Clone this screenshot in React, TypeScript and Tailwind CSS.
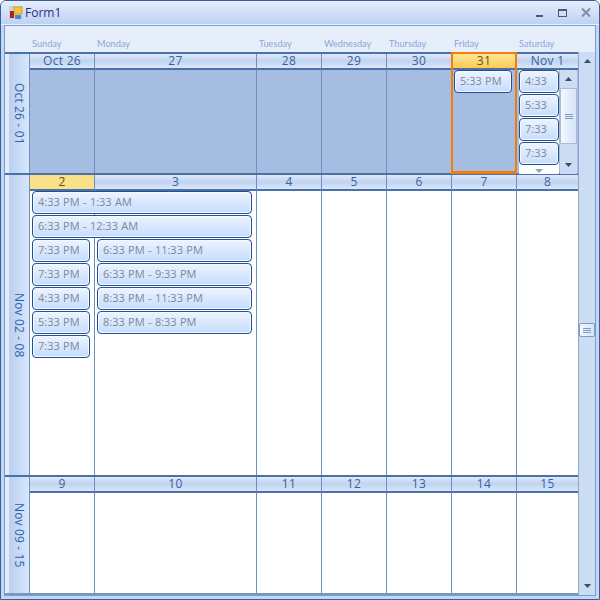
const columns = "grid grid-cols-[25px_65px_162px_65px_65px_65px_65px_61px]";

const dayNames = ["Sunday", "Monday", "Tuesday", "Wednesday", "Thursday", "Friday", "Saturday"];

const weeks = [
  { label: "Oct 26 - 01", days: ["Oct 26", "27", "28", "29", "30", "31", "Nov 1"], height: "h-[121px]" },
  { label: "Nov 02 - 08", days: ["2", "3", "4", "5", "6", "7", "8"], height: "h-[302px]" },
  { label: "Nov 09 - 15", days: ["9", "10", "11", "12", "13", "14", "15"], height: "h-[118px]" },
];

function Appt({ text, className }: { text: string; className: string }) {
  return (
    <div
      className={`flex h-[23px] shrink-0 items-center rounded-[4px] border border-[#25508f] bg-gradient-to-b from-[#edf4ff] to-[#c6dcfd] pl-[5px] text-[11px] [word-spacing:0.5px] whitespace-pre text-[#7d8799] shadow-[inset_0_0_0_1px_#f4f8ff] ${className}`}
    >
      {text}
    </div>
  );
}

function Arrow({ up }: { up?: boolean }) {
  return (
    <svg width="7" height="4" viewBox="0 0 7 4" className="block">
      <path d={up ? "M3.5 0L7 4H0Z" : "M0 0H7L3.5 4Z"} fill="#3d4d66" />
    </svg>
  );
}

function Grip() {
  return (
    <div className="flex flex-col gap-[1px]">
      <div className="h-[1px] w-[8px] bg-[#7d9bc9]" />
      <div className="h-[1px] w-[8px] bg-[#7d9bc9]" />
      <div className="h-[1px] w-[8px] bg-[#7d9bc9]" />
    </div>
  );
}

function WeekBody({ index }: { index: number }) {
  const blue = index === 0;
  return (
    <>
      {[0, 1, 2, 3, 4, 5, 6].map((d) => (
        <div
          key={d}
          className={`border-r border-[#6f90bf] ${blue ? "bg-[#a4bde0]" : "bg-white"} ${d === 6 ? "border-r-0" : ""}`}
        />
      ))}
    </>
  );
}

function Week({ index }: { index: number }) {
  const week = weeks[index];
  return (
    <div className={`${columns} ${week.height} relative grid-rows-[16px_1fr] border-t-2 border-[#4a72a8]`}>
      <div className="row-span-2 flex border-r border-[#6f90bf]">
        <div className="w-[4px] bg-[#e3edfd]" />
        <div className="flex flex-1 items-center justify-center bg-gradient-to-r from-[#b9cfee] to-[#d7e6fc] text-[12px] tracking-[0.15px] text-[#2f5ea6] [writing-mode:vertical-rl]">
          {week.label}
        </div>
      </div>
      {week.days.map((d, i) => {
        const today = index === 1 && i === 0;
        const selected = index === 0 && i === 5;
        return (
          <div
            key={d}
            className={`flex items-center justify-center border-b-2 border-[#4a72a8] text-[12px] leading-none tracking-[0.3px] ${i < 6 ? "border-r border-r-[#6f90bf]" : ""} ${
              today
                ? "bg-[#fbe08a] text-[#5a5324]"
                : selected
                  ? "bg-gradient-to-b from-[#fbe694] to-[#fdc955] text-[#5a5324]"
                  : "bg-gradient-to-b from-[#dfe9fb] via-[#bfd3f0] to-[#dbe7fb] text-[#3a5f9e]"
            }`}
          >
            {d}
          </div>
        );
      })}
      <div className="col-start-2 col-span-7 row-start-2 grid grid-cols-[65px_162px_65px_65px_65px_65px_61px]">
        <WeekBody index={index} />
      </div>
    </div>
  );
}

export default function App() {
  return (
    <div className="flex h-[600px] w-[600px] flex-col overflow-hidden rounded-t-[6px] border border-[#3b5f8f] bg-[#bfd8f8] font-['Open_Sans','Liberation_Sans',sans-serif]">
      {/* title bar */}
      <div className="flex h-[24px] shrink-0 items-center border-b border-[#eaf2fe] bg-gradient-to-b from-[#e6edfb] to-[#bdd2f4] pl-[8px] pr-[8px]">
        <svg width="14" height="14" viewBox="0 0 14 14" className="shrink-0">
          <rect x="0" y="0" width="14" height="14" fill="#c9d2de" />
          <rect x="1" y="5" width="4" height="7" fill="#b32020" />
          <rect x="5" y="1" width="8" height="7" fill="#f6c531" stroke="#b98a1a" strokeWidth="0.6" />
          <rect x="6" y="9" width="6" height="4" fill="#4a86d8" />
        </svg>
        <span className="ml-[2px] text-[12px] text-[#1c2f86]">Form1</span>
        <div className="ml-auto flex items-center">
          <div className="mt-[7px] h-[2px] w-[7px] bg-[#47597a]" />
          <div className="ml-[15px] h-[8px] w-[9px] border border-t-[2px] border-[#47597a]" />
          <svg width="10" height="9" viewBox="0 0 10 9" className="ml-[14px]">
            <path d="M1 0.5L9 8.5M9 0.5L1 8.5" stroke="#7d8ea8" strokeWidth="2" />
          </svg>
        </div>
      </div>

      {/* client area */}
      <div className="mx-[3px] mb-[3px] flex min-h-0 flex-1 border border-[#7b9cc9] bg-[#ccdcf3]">
        <div className="relative w-[573px] shrink-0">
          <div className={`${columns} h-[26px] bg-[#e6eefc]`}>
            <div />
            {dayNames.map((d) => (
              <div key={d} className="flex items-end pb-[4px] pl-[2px] font-['Lato',sans-serif] text-[9.2px] leading-none text-[#8ba6d6]">
                {d}
              </div>
            ))}
          </div>
          {weeks.map((_, i) => (
            <Week key={i} index={i} />
          ))}
          <div className="h-[2px] bg-[#7b96bd]" />

          {/* selected friday */}
          <div className="absolute top-[26px] left-[446px] h-[122px] w-[66px] border-[2px] border-b-[3px] border-[#f57c0a]" />

          {/* week 1 appointments */}
          <div className="absolute top-[44px] left-[449px]">
            <Appt text="5:33 PM" className="w-[58px]" />
          </div>
          <div className="absolute top-[44px] left-[514px] flex w-[40px] flex-col gap-[1px] bg-white">
            <Appt text="4:33" className="w-[40px]" />
            <Appt text="5:33" className="w-[40px]" />
            <Appt text="7:33" className="w-[40px]" />
            <Appt text="7:33" className="w-[40px]" />
            <div className="flex h-[8px] items-center justify-center pt-[1px]">
              <svg width="8" height="4" viewBox="0 0 8 4">
                <path d="M0 0H8L4 4Z" fill="#8aa3c9" />
              </svg>
            </div>
          </div>
          {/* week 1 inner scrollbar */}
          <div className="absolute top-[44px] left-[555px] flex h-[104px] w-[17px] flex-col items-center bg-[#ccdcf3]">
            <div className="flex h-[18px] items-center justify-center">
              <Arrow up />
            </div>
            <div className="flex h-[56px] w-[17px] items-center justify-center border border-[#a9bcd8] bg-gradient-to-r from-[#f3f7fe] to-[#d7e4f8]">
              <Grip />
            </div>
            <div className="mt-auto flex h-[18px] items-center justify-center">
              <Arrow />
            </div>
          </div>

          {/* week 2 appointments */}
          <div className="absolute top-[165px] left-[27px] flex w-[220px] flex-col gap-[1px]">
            <Appt text="4:33 PM - 1:33 AM" className="w-[220px]" />
            <Appt text="6:33 PM - 12:33 AM" className="w-[220px]" />
            <div className="flex gap-[7px]">
              <div className="flex w-[58px] flex-col gap-[1px]">
                <Appt text="7:33 PM" className="" />
                <Appt text="7:33 PM" className="" />
                <Appt text="4:33 PM" className="" />
                <Appt text="5:33 PM" className="" />
                <Appt text="7:33 PM" className="" />
              </div>
              <div className="flex flex-1 flex-col gap-[1px]">
                <Appt text="6:33 PM - 11:33 PM" className="" />
                <Appt text="6:33 PM - 9:33 PM" className="" />
                <Appt text="8:33 PM - 11:33 PM" className="" />
                <Appt text="8:33 PM - 8:33 PM" className="" />
              </div>
            </div>
          </div>
        </div>

        {/* main scrollbar */}
        <div className="flex flex-1 flex-col items-center bg-[#ccdcf3]">
          <div className="h-[26px] w-full shrink-0 bg-[#e6eefc]" />
          <div className="flex h-[18px] w-full items-center justify-center border-l border-[#8ca5c9]">
            <Arrow up />
          </div>
          <div className="flex w-full flex-1 flex-col items-center border-l border-[#8ca5c9]">
            <div className="mt-[253px] flex h-[14px] w-[16px] items-center justify-center rounded-[2px] border border-[#7f9ac5] bg-gradient-to-r from-[#f3f7fe] to-[#d7e4f8]">
              <Grip />
            </div>
            <div className="mt-auto flex h-[18px] items-center justify-center">
              <Arrow />
            </div>
          </div>
        </div>
      </div>
    </div>
  );
}
